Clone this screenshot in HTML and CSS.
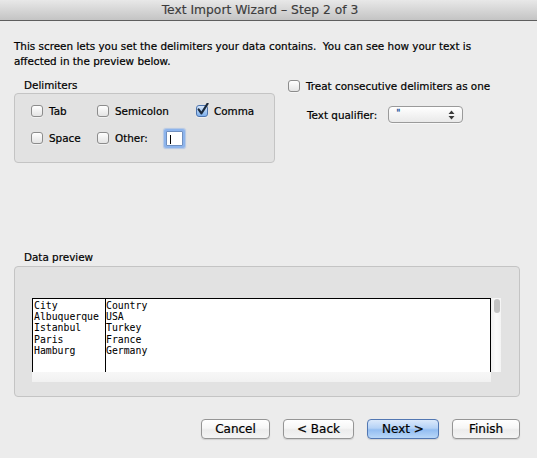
FILE: index.html
```html
<!DOCTYPE html>
<html>
<head>
<meta charset="utf-8">
<link rel="stylesheet" href="styles.css">
</head>
<body>
<div class="window">
  <div class="titlebar">Text Import Wizard – Step 2 of 3</div>
  <div class="content">
    <p class="intro">This screen lets you set the delimiters your data contains.&nbsp; You can see how your text is<br>affected in the preview below.</p>

    <div class="top">
      <div class="delims">
        <div class="group-label">Delimiters</div>
        <div class="group-box delim-box">
          <div class="delim-grid">
            <div class="check"><span class="cb"></span><span>Tab</span></div>
            <div class="check"><span class="cb"></span><span>Semicolon</span></div>
            <div class="check"><span class="cb checked"><svg class="tick" width="14" height="14" viewBox="0 0 14 14"><path d="M2.6 6.4 L5.4 10.4 L11.6 0.6" fill="none" stroke="#1c2a3c" stroke-width="2.1" stroke-linecap="round" stroke-linejoin="round"/></svg></span><span>Comma</span></div>
            <div class="check"><span class="cb"></span><span>Space</span></div>
            <div class="check"><span class="cb"></span><span>Other:</span><span class="field"><span class="caret"></span></span></div>
          </div>
        </div>
      </div>

      <div class="options">
        <div class="check"><span class="cb"></span><span>Treat consecutive delimiters as one</span></div>
        <div class="qualifier">
          <span>Text qualifier:</span>
          <div class="select">
            <span class="select-value">"</span>
            <svg class="arrows" width="7" height="10" viewBox="0 0 7 10"><path d="M3.5 0.5 L6.5 4 L0.5 4 Z M0.5 6 L6.5 6 L3.5 9.5 Z" fill="#3a3a3a"/></svg>
          </div>
        </div>
      </div>
    </div>

    <div class="group-label preview-label">Data preview</div>
    <div class="group-box preview-box">
      <div class="table-wrap">
        <div class="table">
          <div class="col col1">City<br>Albuquerque<br>Istanbul<br>Paris<br>Hamburg</div>
          <div class="col col2">Country<br>USA<br>Turkey<br>France<br>Germany</div>
        </div>
        <div class="vscroll"><div class="thumb"></div></div>
      </div>
      <div class="hscroll"></div>
    </div>

    <div class="buttons">
      <button class="btn w-cancel">Cancel</button>
      <button class="btn w-back">&lt; Back</button>
      <button class="btn primary w-next">Next &gt;</button>
      <button class="btn w-finish">Finish</button>
    </div>
  </div>
</div>
</body>
</html>
```

FILE: styles.css
```css
* { box-sizing: border-box; }

html, body {
  margin: 0;
  padding: 0;
  background: #ececec;
}

body {
  font-family: "DejaVu Sans", "Noto Sans", sans-serif;
  font-size: 10.4px;
  color: #000;
  width: 537px;
  height: 458px;
  overflow: hidden;
  -webkit-text-stroke: 0.2px #000;
}

.titlebar {
  height: 21px;
  line-height: 20px;
  padding-right: 17px;
  text-align: center;
  font-size: 12.3px;
  color: #3c3c3c;
  -webkit-text-stroke: 0.15px #3c3c3c;
  background: linear-gradient(#e8e8e8, #d6d6d6 50%, #c4c4c4);
  border-bottom: 1px solid #5e5e5e;
}

.content {
  padding: 0 17px 0 14px;
}

.intro {
  margin: 18px 0 0 0;
  line-height: 15px;
}

.top {
  display: flex;
  gap: 13px;
  margin-top: 9px;
}

.delims {
  width: 261px;
}

.group-label {
  padding-left: 10px;
  line-height: 14px;
  margin-bottom: 1px;
}

.group-box {
  background: #e2e2e2;
  border: 1px solid #c4c4c4;
  border-radius: 4px;
}

.delim-box {
  height: 70px;
  padding: 11px 0 0 16px;
}

.delim-grid {
  display: grid;
  grid-template-columns: 66px 99px auto;
  grid-auto-rows: 27px;
}

.check {
  display: flex;
  align-items: flex-start;
  gap: 6px;
  line-height: 12px;
}

.cb {
  position: relative;
  flex: none;
  width: 12px;
  height: 12px;
  border: 1px solid #8c8c8c;
  border-radius: 3px;
  background: linear-gradient(#ffffff, #f1f1f1 50%, #e4e4e4);
  box-shadow: 0 1px 0 rgba(255,255,255,0.5);
}

.cb.checked {
  border-color: #4d74ae;
  background: linear-gradient(#d9e8fb, #a9cbf3 50%, #7fb0ec);
}

.tick {
  position: absolute;
  left: -1px;
  top: -3px;
}

.field {
  position: relative;
  width: 17px;
  height: 15px;
  margin-left: 12px;
  margin-top: -1px;
  background: #fff;
  border: 1px solid #6f8fbf;
  box-shadow: 0 0 0 2px #8db4ec, 0 0 1px 3px rgba(120,165,230,0.45);
  border-radius: 1px;
}

.caret {
  position: absolute;
  left: 3px;
  top: 3px;
  width: 1px;
  height: 9px;
  background: #000;
}

.options {
  display: flex;
  flex-direction: column;
  padding-top: 2px;
}

.qualifier {
  display: flex;
  align-items: center;
  gap: 11px;
  margin-top: 14px;
  padding-left: 19px;
}

.select {
  position: relative;
  width: 75px;
  height: 17px;
  border: 1px solid #9a9a9a;
  border-radius: 4px;
  background: linear-gradient(#ffffff, #f4f4f4 50%, #e9e9e9);
  box-shadow: 0 1px 0 rgba(255,255,255,0.6);
  display: flex;
  align-items: center;
  justify-content: space-between;
  padding: 0 7px 0 7px;
}

.select-value {
  font-size: 9px;
  line-height: 9px;
  margin-top: -3px;
  color: #1a4f9c;
  -webkit-text-stroke: 0.3px #1a4f9c;
}

.preview-label {
  margin-top: 87px;
  margin-bottom: 2px;
}

.preview-box {
  height: 131px;
  padding: 31px 0 0 17px;
}

.table-wrap {
  display: flex;
  width: 469px;
  height: 74px;
}

.table {
  flex: 1;
  display: flex;
  background: #fff;
  border: 1px solid #000;
  border-bottom: none;
  font-family: "DejaVu Sans Mono", "Liberation Mono", monospace;
  font-size: 9.8px;
  line-height: 11.2px;
  -webkit-text-stroke: 0.05px #000;
}

.col {
  padding-top: 1px;
}

.col1 {
  width: 73px;
  padding-left: 1px;
  border-right: 1px solid #000;
}

.col2 {
  flex: 1;
}

.vscroll {
  width: 10px;
  background: linear-gradient(90deg, #f0f0f0, #fbfbfb 50%, #f4f4f4);
  padding: 1px 1px 0 3px;
}

.thumb {
  width: 6px;
  height: 14px;
  border-radius: 3px;
  background: #c3c3c3;
}

.hscroll {
  width: 459px;
  height: 10px;
  background: linear-gradient(#f7f7f7, #f1f1f1);
}

.buttons {
  display: flex;
  justify-content: flex-end;
  gap: 13px;
  margin-top: 22px;
}

.btn {
  height: 20px;
  padding: 0;
  font-family: "DejaVu Sans", "Noto Sans", sans-serif;
  font-size: 12px;
  line-height: 18px;
  color: #000;
  -webkit-text-stroke: 0.2px #000;
  border: 1px solid #959595;
  border-radius: 4px;
  background: linear-gradient(#ffffff, #f6f6f6 45%, #ececec 55%, #f4f4f4);
  box-shadow: 0 1px 1px rgba(0,0,0,0.12);
}

.btn.primary {
  border-color: #5277b2;
  background: linear-gradient(#dbe9fb, #b5d2f6 45%, #93bdf1 55%, #b9d7f8);
}

.w-cancel { width: 69px; }
.w-back { width: 71px; }
.w-next { width: 72px; }
.w-finish { width: 68px; }
```
